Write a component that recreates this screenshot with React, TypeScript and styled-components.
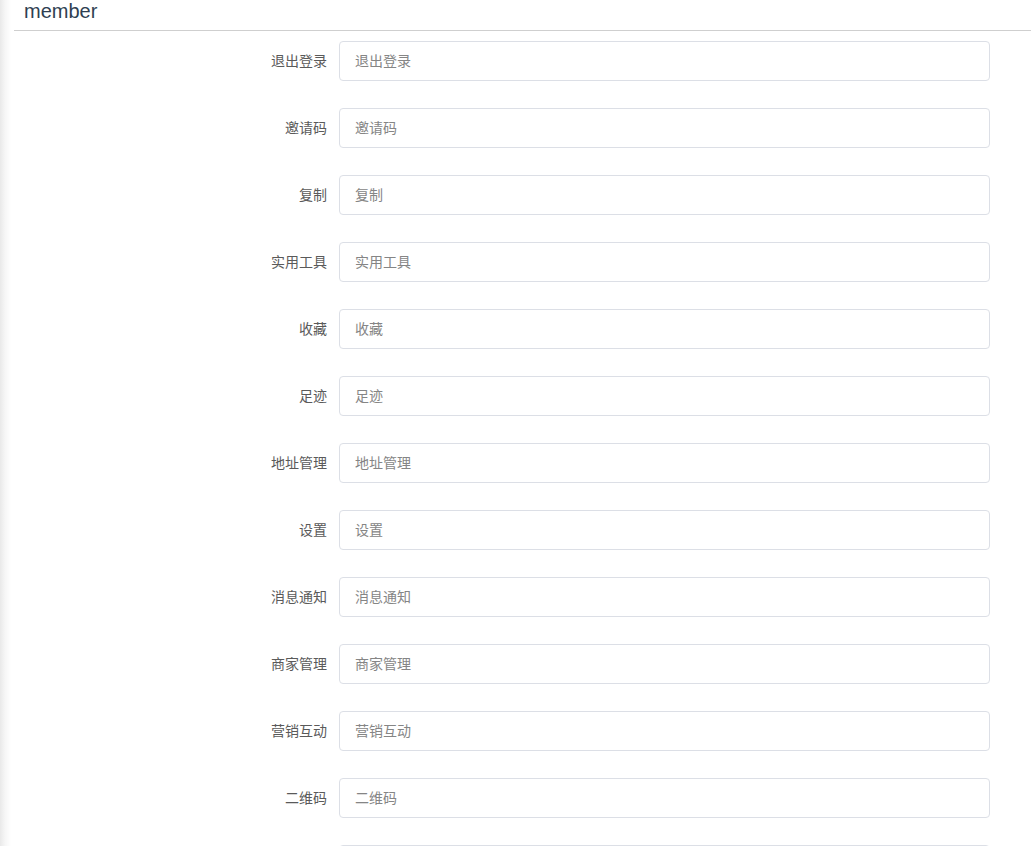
import React from 'react';
import styled, { createGlobalStyle } from 'styled-components';

const GlobalStyle = createGlobalStyle`
  html, body {
    margin: 0;
    padding: 0;
    background: #fff;
    font-family: "Liberation Sans", "Noto Sans CJK SC", sans-serif;
  }
  * {
    box-sizing: border-box;
  }
`;

const items = [
  '退出登录',
  '邀请码',
  '复制',
  '实用工具',
  '收藏',
  '足迹',
  '地址管理',
  '设置',
  '消息通知',
  '商家管理',
  '营销互动',
  '二维码',
  '关于我们',
  '帮助中心',
];

const App = () => {
  return (
    <Page>
      <GlobalStyle />
      <Header>member</Header>
      <Form>
        {items.map((name) => (
          <FormItem key={name}>
            <Label>{name}</Label>
            <Input placeholder={name} />
          </FormItem>
        ))}
      </Form>
    </Page>
  );
};

const Page = styled.div`
  min-height: 100vh;
  padding-left: 14px;
  background: linear-gradient(to right, #e9e9e9 0, #f6f6f6 5px, #fff 11px);
`;

const Header = styled.h2`
  margin: 0;
  height: 31px;
  padding: 0 10px;
  font-size: 20px;
  font-weight: 400;
  line-height: 22px;
  color: #2f3f52;
  background: #fff;
  border-bottom: 1px solid #cfcfcf;
`;

const Form = styled.form`
  padding: 10px 41px 0 0;
  background: #fff;
  display: flex;
  flex-direction: column;
  gap: 27px;
`;

const FormItem = styled.div`
  display: grid;
  grid-template-columns: 325px 1fr;
  align-items: center;
`;

const Label = styled.label`
  text-align: right;
  padding-right: 12px;
  font-size: 14px;
  color: #5a5a5a;
  line-height: 20px;
`;

const Input = styled.input`
  height: 40px;
  width: 100%;
  padding: 0 15px;
  border: 1px solid #dcdfe6;
  border-radius: 4px;
  font-family: inherit;
  font-size: 14px;
  color: #606266;
  outline: none;

  &::placeholder {
    color: #858585;
  }
`;

export default App;
